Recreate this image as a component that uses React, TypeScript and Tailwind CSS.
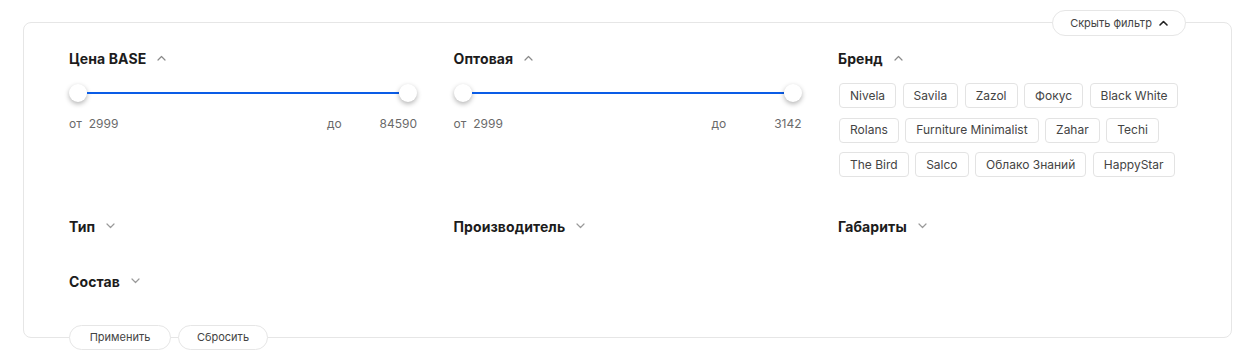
import React from "react";

const font = { fontFamily: "Inter, 'Noto Sans', sans-serif" };

function ChevronUp({ className = "", w = 1.2 }: { className?: string; w?: number }) {
  return (
    <svg width="9" height="6" viewBox="0 0 9 6" fill="none" className={className}>
      <path d="M1 5L4.5 1.5L8 5" stroke="currentColor" strokeWidth={w} strokeLinecap="round" strokeLinejoin="round" />
    </svg>
  );
}

function ChevronDown({ className = "" }: { className?: string }) {
  return (
    <svg width="9" height="6" viewBox="0 0 9 6" fill="none" className={className}>
      <path d="M1 1L4.5 4.5L8 1" stroke="currentColor" strokeWidth="1.2" strokeLinecap="round" strokeLinejoin="round" />
    </svg>
  );
}

function Heading({ title, open }: { title: string; open?: boolean }) {
  return (
    <div className="flex h-5 items-center">
      <span className="text-[14px] font-bold tracking-[0.1px] text-[#1c1c1c]">{title}</span>
      {open ? (
        <ChevronUp className="ml-[11px] text-[#8a8a8a]" />
      ) : (
        <ChevronDown className="ml-[11px] text-[#9a9a9a]" />
      )}
    </div>
  );
}

function Range({ from, to }: { from: string; to: string }) {
  return (
    <div className="w-[348px]">
      <div className="mt-[16px] flex h-[18px] items-center">
        <div className="h-[18px] w-[18px] shrink-0 rounded-full bg-white shadow-[0_2px_5px_rgba(0,0,0,0.3)]" />
        <div className="h-[2px] flex-1 bg-[#0a5ce6]" />
        <div className="h-[18px] w-[18px] shrink-0 rounded-full bg-white shadow-[0_2px_5px_rgba(0,0,0,0.3)]" />
      </div>
      <div className="mt-[14px] flex h-4 items-center justify-between text-[12px] text-[#6a6a6a]">
        <div className="flex items-center gap-[7px]">
          <span>от</span>
          <span>{from}</span>
        </div>
        <div className="flex w-[90px] items-center justify-between">
          <span>до</span>
          <span>{to}</span>
        </div>
      </div>
    </div>
  );
}

const brands = [
  "Nivela", "Savila", "Zazol", "Фокус", "Black White",
  "Rolans", "Furniture Minimalist", "Zahar", "Techi",
  "The Bird", "Salco", "Облако Знаний", "HappyStar",
];

export default function App() {
  return (
    <div className="min-h-[358px] w-[1253px] bg-white pt-[22px]" style={font}>
      <div className="relative ml-[23px] w-[1209px] rounded-[8px] border border-[#e6e6e6] pb-[46px] pl-[45px] pt-[25px]">
        <button className="absolute right-[45px] top-[-13px] flex h-[26px] w-[134px] items-center justify-center gap-[7px] rounded-full border border-[#e6e6e6] bg-white text-[11px] text-[#444]">
          Скрыть фильтр
          <ChevronUp className="text-[#222]" w={1.6} />
        </button>

        <div className="grid grid-cols-[348px_348px_auto] gap-x-[36.5px]">
          <div>
            <Heading title="Цена BASE" open />
            <Range from="2999" to="84590" />
          </div>
          <div>
            <Heading title="Оптовая" open />
            <Range from="2999" to="3142" />
          </div>
          <div>
            <Heading title="Бренд" open />
            <div className="mt-[15px] flex w-[345px] flex-wrap gap-x-[6.5px] gap-y-[9.5px] pl-[1px]">
              {brands.map((b) => (
                <span
                  key={b}
                  className="flex h-[25px] items-center rounded-[4px] border border-[#e3e3e3] px-[10px] text-[12px] text-[#444]"
                >
                  {b}
                </span>
              ))}
            </div>
          </div>

          <div className="pt-[39px]"><Heading title="Тип" /></div>
          <div className="pt-[39px]"><Heading title="Производитель" /></div>
          <div className="pt-[39px]"><Heading title="Габариты" /></div>

          <div className="pt-[35px]"><Heading title="Состав" /></div>
        </div>

        <div className="absolute bottom-[-13px] left-[45px] flex gap-[7px]">
          <button className="flex h-[25px] w-[102px] items-center justify-center rounded-full border border-[#e6e6e6] bg-white text-[11px] text-[#444]">
            Применить
          </button>
          <button className="flex h-[25px] w-[90px] items-center justify-center rounded-full border border-[#e6e6e6] bg-white text-[11px] text-[#444]">
            Сбросить
          </button>
        </div>
      </div>
    </div>
  );
}
